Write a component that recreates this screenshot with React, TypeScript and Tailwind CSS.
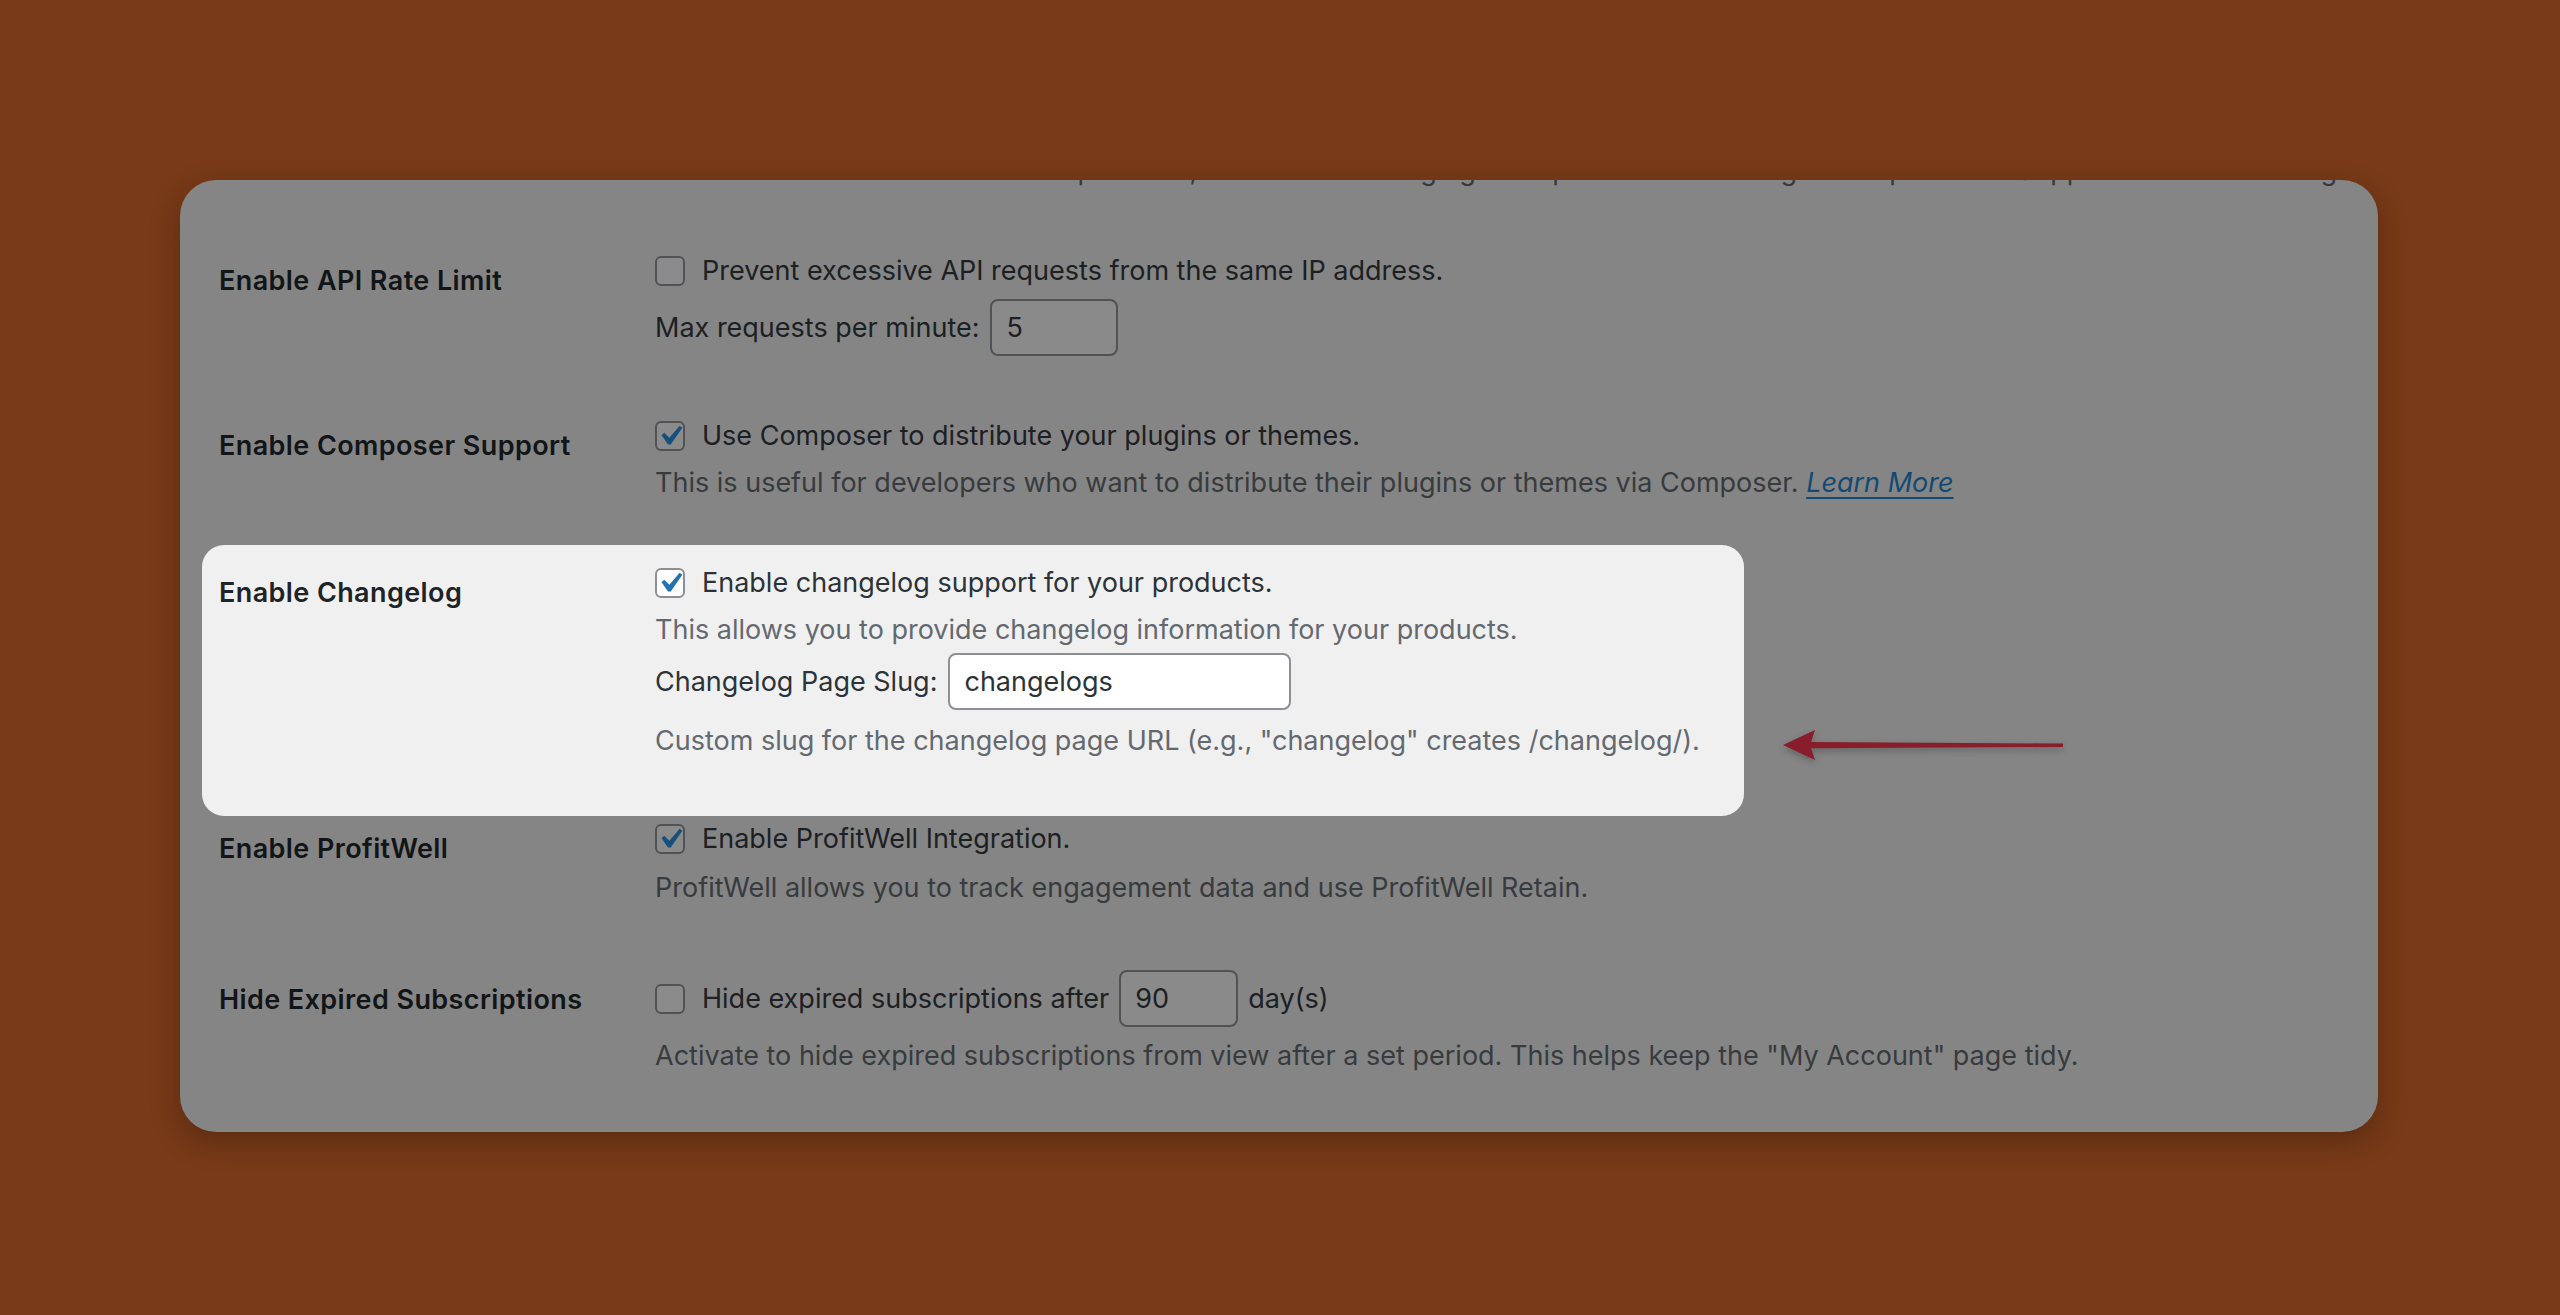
import { ReactNode } from 'react';

type Tone = 'dim' | 'lit';

const tones = {
  dim: {
    label: 'text-[#121517]',
    text: 'text-[#1c2023]',
    desc: 'text-[#383b3e]',
    box: 'border-[#505255] bg-[#8b8b8b]',
    input: 'border-[#505255] bg-[#8a8a8a] text-[#1c2023]',
    check: '#17507d',
    link: 'text-[#124a74]',
  },
  lit: {
    label: 'text-[#1d2327]',
    text: 'text-[#2c3338]',
    desc: 'text-[#646970]',
    box: 'border-[#8c8f94] bg-white',
    input: 'border-[#8c8f94] bg-white text-[#2c3338]',
    check: '#2271b1',
    link: 'text-[#2271b1]',
  },
};

const Checkbox = ({ checked, tone }: { checked?: boolean; tone: Tone }) => (
  <span
    className={`flex h-[30px] w-[30px] shrink-0 items-center justify-center rounded-[6px] border-2 ${tones[tone].box}`}
  >
    {checked && (
      <svg viewBox="0 0 20 20" className="h-[40px] w-[40px] shrink-0">
        <path
          d="M14.83 4.89l1.34.94-5.81 8.38H9.02L5.78 9.67l1.34-1.25 2.57 2.4z"
          fill={tones[tone].check}
        />
      </svg>
    )}
  </span>
);

const CheckLine = ({
  checked,
  tone,
  children,
}: {
  checked?: boolean;
  tone: Tone;
  children: ReactNode;
}) => (
  <div className={`flex h-[40px] items-center gap-[17px] ${tones[tone].text}`}>
    <Checkbox checked={checked} tone={tone} />
    <span>{children}</span>
  </div>
);

const TextInput = ({
  value,
  tone,
  className,
}: {
  value: string;
  tone: Tone;
  className: string;
}) => (
  <input
    readOnly
    value={value}
    className={`h-[57px] rounded-[8px] border-2 px-[14px] outline-none ${tones[tone].input} ${className}`}
  />
);

const Description = ({ tone, className = '', children }: { tone: Tone; className?: string; children: ReactNode }) => (
  <p className={`h-[40px] whitespace-nowrap ${tones[tone].desc} ${className}`}>{children}</p>
);

const Row = ({
  label,
  tone,
  className = '',
  children,
}: {
  label: string;
  tone: Tone;
  className?: string;
  children: ReactNode;
}) => (
  <div className={`flex ${className}`}>
    <div className={`w-[436px] shrink-0 pt-[10px] font-semibold tracking-[0.015em] ${tones[tone].label}`}>{label}</div>
    <div className="flex flex-col">{children}</div>
  </div>
);

const Arrow = () => (
  <svg
    viewBox="0 0 282 32"
    className="absolute left-[1602px] top-[549px] h-[32px] w-[282px] drop-shadow-[0_3px_3px_rgba(0,0,0,0.25)]"
  >
    <path d="M1 16 L33 1 L29 13 L281 14.6 L281 18 L29 19.2 L33 31 Z" fill="#8a1d2b" />
  </svg>
);

export default function App() {
  return (
    <div className="min-h-screen bg-[#783a17] pl-[180px] pt-[180px] font-[Inter,'Noto_Sans',sans-serif] text-[27px] leading-[40px]">
      <div className="relative h-[952px] w-[2198px] overflow-hidden rounded-[36px] bg-[#858585] pl-[39px] shadow-[0_10px_30px_rgba(0,0,0,0.25)]">
        <div className="-mt-[29px] flex">
          <div className="w-[436px] shrink-0" />
          <Description tone="dim">
            If a license is activated for "example.com", it extends to "staging.example.com" and "stage.example.com". Supported domains: staging, stage, dev
          </Description>
        </div>

        <Row label="Enable API Rate Limit" tone="dim" className="mt-[60px]">
          <CheckLine tone="dim">Prevent excessive API requests from the same IP address.</CheckLine>
          <div className={`mt-[8px] flex h-[57px] items-center gap-[11px] ${tones.dim.text}`}>
            <span>Max requests per minute:</span>
            <TextInput value="5" tone="dim" className="w-[128px]" />
          </div>
        </Row>

        <Row label="Enable Composer Support" tone="dim" className="mt-[60px]">
          <CheckLine checked tone="dim">
            Use Composer to distribute your plugins or themes.
          </CheckLine>
          <Description tone="dim" className="mt-[7px]">
            This is useful for developers who want to distribute their plugins or themes via Composer.{' '}
            <a className={`italic underline underline-offset-[5px] ${tones.dim.link}`}>Learn More</a>
          </Description>
        </Row>

        <Row
          label="Enable Changelog"
          tone="lit"
          className="-ml-[17px] mt-[42px] w-[1542px] rounded-[22px] bg-[#f0f0f1] pb-[55px] pl-[17px] pt-[18px]"
        >
          <CheckLine checked tone="lit">
            Enable changelog support for your products.
          </CheckLine>
          <Description tone="lit" className="mt-[7px]">
            This allows you to provide changelog information for your products.
          </Description>
          <div className={`mt-[3px] flex h-[57px] items-center gap-[11px] ${tones.lit.text}`}>
            <span>Changelog Page Slug:</span>
            <TextInput value="changelogs" tone="lit" className="w-[343px] text-[#1d2327]" />
          </div>
          <Description tone="lit" className="mt-[11px]">
            Custom slug for the changelog page URL (e.g., "changelog" creates /changelog/).
          </Description>
        </Row>

        <Row label="Enable ProfitWell" tone="dim" className="mt-[3px]">
          <CheckLine checked tone="dim">
            Enable ProfitWell Integration.
          </CheckLine>
          <Description tone="dim" className="mt-[9px]">
            ProfitWell allows you to track engagement data and use ProfitWell Retain.
          </Description>
        </Row>

        <Row label="Hide Expired Subscriptions" tone="dim" className="mt-[62px]">
          <div className={`flex h-[57px] items-center ${tones.dim.text}`}>
            <Checkbox tone="dim" />
            <span className="ml-[17px]">Hide expired subscriptions after</span>
            <TextInput value="90" tone="dim" className="ml-[10px] w-[119px]" />
            <span className="ml-[10px]">day(s)</span>
          </div>
          <Description tone="dim" className="mt-[9px]">
            Activate to hide expired subscriptions from view after a set period. This helps keep the "My Account" page tidy.
          </Description>
        </Row>

        <Arrow />
      </div>
    </div>
  );
}
